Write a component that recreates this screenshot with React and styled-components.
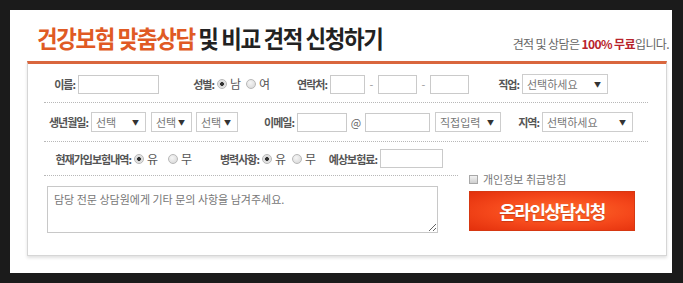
import React from 'react';
import styled, { createGlobalStyle } from 'styled-components';

const GlobalStyle = createGlobalStyle`
  html, body {
    margin: 0;
    padding: 0;
    background: #1b1b1b;
  }
  body {
    width: 683px;
    height: 283px;
    overflow: hidden;
    font-family: 'Noto Sans CJK KR', 'Noto Sans', sans-serif;
  }
`;

const Sheet = styled.div`
  width: 662px;
  height: 263px;
  margin: 10px 0 0 10px;
  padding: 0 5px 0 17px;
  box-sizing: border-box;
  background: #fff;
`;

const Header = styled.header`
  height: 51px;
  box-sizing: border-box;
  padding: 0 0 11px 10px;
  display: flex;
  align-items: flex-end;
  justify-content: space-between;
`;

const Title = styled.h1`
  margin: 0;
  font-size: 24px;
  line-height: 1;
  font-weight: 700;
  letter-spacing: -1.5px;
  color: #222;
  white-space: nowrap;
  transform: scaleX(0.935);
  transform-origin: left bottom;

  em {
    font-style: normal;
    color: #e05a24;
  }
`;

const Notice = styled.p`
  margin: 0 -2px 0 0;
  font-size: 12px;
  line-height: 1;
  letter-spacing: -0.6px;
  color: #666;

  strong {
    color: #b8232b;
  }
`;

const FormBox = styled.form`
  height: 195px;
  box-sizing: border-box;
  border: 1px solid #d6d6d6;
  border-top: 3px solid #d9663d;
  box-shadow: 0 2px 3px rgba(0, 0, 0, 0.12);
  padding: 0 18px 0 16px;
`;

const Row = styled.div`
  display: flex;
  align-items: center;
  padding: ${({ $pad }) => $pad};
  border-bottom: 1px dotted #b8b8b8;
`;

const Field = styled.div`
  flex: none;
  width: ${({ $w }) => $w}px;
  display: flex;
  align-items: center;
`;

const Label = styled.label`
  flex: none;
  width: ${({ $w }) => $w}px;
  display: flex;
  justify-content: flex-end;
  padding-right: 3px;
  box-sizing: border-box;
  font-size: 11px;
  font-weight: 700;
  letter-spacing: -1px;
  color: #555;
  white-space: nowrap;
`;

const TextInput = styled.input`
  width: ${({ $w }) => $w}px;
  height: 19px;
  box-sizing: border-box;
  margin: 0;
  border: 1px solid #cacaca;
  background: #fff;
  outline: none;
`;

const Sep = styled.span`
  width: ${({ $w }) => $w}px;
  text-align: center;
  font-size: 11px;
  color: ${({ $dark }) => ($dark ? '#666' : '#999')};
`;

const SelectWrap = styled.span`
  position: relative;
  display: inline-block;
  margin-left: ${({ $gap }) => $gap || 0}px;

  &::after {
    content: '▼';
    position: absolute;
    right: 7px;
    top: 50%;
    transform: translateY(-50%);
    font-size: 7px;
    color: #333;
    pointer-events: none;
  }
`;

const Select = styled.select`
  display: block;
  width: ${({ $w }) => $w}px;
  height: 20px;
  box-sizing: border-box;
  margin: 0;
  padding: 0 0 0 4px;
  appearance: none;
  border: 1px solid #cdcdcd;
  border-radius: 0;
  background: #fff;
  font-family: inherit;
  font-size: 11px;
  color: #777;
  outline: none;
`;

const Radio = styled.span`
  flex: none;
  width: 10px;
  height: 10px;
  box-sizing: border-box;
  border-radius: 50%;
  border: 1px solid #b8b8b8;
  background: ${({ $on }) =>
    $on
      ? 'radial-gradient(circle, #333 0 1.6px, #d8d8d8 2.2px, #f4f4f4 100%)'
      : 'radial-gradient(circle at 40% 35%, #f6f6f6 0, #d4d4d4 100%)'};
  margin: 0 3px 0 ${({ $before }) => $before || 0}px;
`;

const Choice = styled.span`
  font-size: 12px;
  color: #555;
  line-height: 1;
`;

const Bottom = styled.div`
  display: flex;
  align-items: flex-end;
`;

const LeftCol = styled.div`
  width: 414px;
`;

const Memo = styled.textarea`
  display: block;
  width: 391px;
  height: 47px;
  box-sizing: border-box;
  margin: 10px 0 0 3px;
  padding: 4px 6px;
  border: 1px solid #c8c8c8;
  font-family: inherit;
  font-size: 11px;
  color: #444;
  outline: none;

  &::placeholder {
    color: #777;
  }
`;

const RightCol = styled.div`
  width: 166px;
  margin: 0 0 2px 11px;
  display: flex;
  flex-direction: column;
`;

const Agree = styled.label`
  display: flex;
  align-items: center;
  height: 12px;
  margin-bottom: 6px;
  font-size: 11px;
  color: #777;
`;

const Check = styled.span`
  width: 9px;
  height: 9px;
  box-sizing: border-box;
  border: 1px solid #a8a8a8;
  background: linear-gradient(#f2f2f2, #cfcfcf);
  margin-right: 5px;
`;

const Submit = styled.button`
  width: 166px;
  height: 40px;
  border: 1px solid #d63812;
  background: radial-gradient(ellipse at 55% 50%, #ff6c2a 0%, #f5481b 55%, #e3300c 100%);
  font-family: inherit;
  font-size: 18px;
  font-weight: 700;
  letter-spacing: -1.5px;
  color: #fff;
  text-shadow: 0 1px 1px rgba(120, 20, 0, 0.3);
  cursor: pointer;
`;

const Pick = ({ w, gap, children }) => (
  <SelectWrap $gap={gap}>
    <Select $w={w}>
      <option>{children}</option>
    </Select>
  </SelectWrap>
);

const YesNo = ({ a, b, gap }) => (
  <>
    <Radio $on />
    <Choice>{a}</Choice>
    <Radio $before={gap} />
    <Choice>{b}</Choice>
  </>
);

const App = () => (
  <>
    <GlobalStyle />
    <Sheet>
      <Header>
        <Title>
          <em>건강보험 맞춤상담</em> 및 비교 견적 신청하기
        </Title>
        <Notice>
          견적 및 상담은 <strong>100% 무료</strong>입니다.
        </Notice>
      </Header>
      <FormBox onSubmit={e => e.preventDefault()}>
        <Row $pad="10px 0 8px">
          <Field $w={115}>
            <Label $w={34}>이름:</Label>
            <TextInput $w={81} />
          </Field>
          <Field $w={134}>
            <Label $w={58}>성별:</Label>
            <YesNo a="남" b="여" gap={5} />
          </Field>
          <Field $w={176}>
            <Label $w={37}>연락처:</Label>
            <TextInput $w={35} />
            <Sep $w={13}>-</Sep>
            <TextInput $w={39} />
            <Sep $w={13}>-</Sep>
            <TextInput $w={39} />
          </Field>
          <Field $w={139}>
            <Label $w={53}>직업:</Label>
            <Pick w={86}>선택하세요</Pick>
          </Field>
        </Row>
        <Row $pad="9px 0 9px">
          <Field $w={194}>
            <Label $w={47}>생년월일:</Label>
            <Pick w={55}>선택</Pick>
            <Pick w={41} gap={5}>선택</Pick>
            <Pick w={42} gap={4}>선택</Pick>
          </Field>
          <Field $w={263}>
            <Label $w={59}>이메일:</Label>
            <TextInput $w={50} />
            <Sep $w={18} $dark>@</Sep>
            <TextInput $w={65} />
            <Pick w={66} gap={5}>직접입력</Pick>
          </Field>
          <Field $w={132}>
            <Label $w={41}>지역:</Label>
            <Pick w={91}>선택하세요</Pick>
          </Field>
        </Row>
        <Bottom>
          <LeftCol>
            <Row $pad="7px 0 7px">
              <Field $w={150}>
                <Label $w={90}>현재가입보험내역:</Label>
                <YesNo a="유" b="무" gap={10} />
              </Field>
              <Field $w={116}>
                <Label $w={68}>병력사항:</Label>
                <YesNo a="유" b="무" gap={6} />
              </Field>
              <Field $w={133}>
                <Label $w={70}>예상보험료:</Label>
                <TextInput $w={63} />
              </Field>
            </Row>
            <Memo placeholder="담당 전문 상담원에게 기타 문의 사항을 남겨주세요." />
          </LeftCol>
          <RightCol>
            <Agree>
              <Check />
              개인정보 취급방침
            </Agree>
            <Submit type="submit">온라인상담신청</Submit>
          </RightCol>
        </Bottom>
      </FormBox>
    </Sheet>
  </>
);

export default App;
